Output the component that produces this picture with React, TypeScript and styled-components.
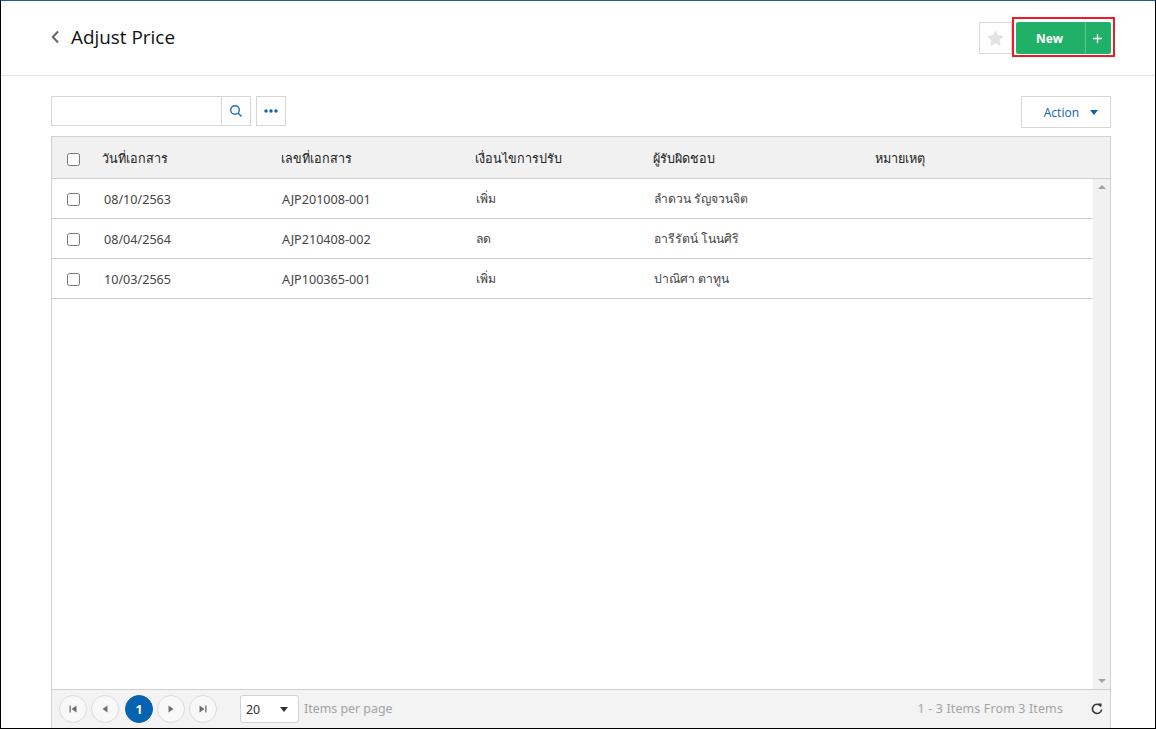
import React from "react";
import styled, { createGlobalStyle } from "styled-components";

const Global = createGlobalStyle`
  html, body { margin: 0; padding: 0; background: #fff; }
  body { font-family: Tahoma, "Noto Sans", "DejaVu Sans", sans-serif; }
  * { box-sizing: border-box; }
`;

const Frame = styled.div`
  width: 1156px;
  height: 729px;
  border-left: 1px solid #000;
  border-right: 1px solid #000;
  border-bottom: 1px solid #000;
  border-top: 1px solid #1c5f96;
  overflow: hidden;
  display: flex;
  flex-direction: column;
`;

const Header = styled.header`
  height: 75px;
  flex: none;
  border-bottom: 1px solid #e3e3e3;
  display: flex;
  align-items: flex-start;
  padding: 16px 40px 0 50px;
`;

const BackTitle = styled.div`
  display: flex;
  align-items: center;
  gap: 12px;
  height: 40px;
  flex: 1;
`;

const Title = styled.h1`
  margin: 0 0 1px;
  font: 400 18.9px "Open Sans", sans-serif;
  color: #111;
`;

const StarButton = styled.button`
  width: 33px;
  height: 32px;
  margin-top: 5px;
  padding: 0;
  background: #fff;
  border: 1px solid #d9d9d9;
  display: flex;
  align-items: center;
  justify-content: center;
`;

const Highlight = styled.div`
  border: 2px solid #ed1c24;
  height: 40px;
  width: 103px;
  padding: 3px 2px 1px;
`;

const NewButton = styled.div`
  height: 32px;
  background: #20b068;
  border-radius: 2px;
  display: flex;
  color: #fff;
`;

const NewLabel = styled.span`
  width: 70px;
  padding-right: 2px;
  border-right: 1px solid #5cc792;
  display: flex;
  align-items: center;
  justify-content: center;
  font: 700 12px "Open Sans", sans-serif;
`;

const NewPlus = styled.span`
  flex: 1;
  padding-right: 2px;
  display: flex;
  align-items: center;
  justify-content: center;
`;

const Content = styled.main`
  flex: 1;
  padding: 20px 44px 0 50px;
  display: flex;
  flex-direction: column;
  min-height: 0;
`;

const Toolbar = styled.div`
  display: flex;
  align-items: flex-start;
  height: 40px;
  flex: none;
`;

const SearchInput = styled.div`
  width: 171px;
  height: 30px;
  border: 1px solid #d6d6d6;
`;

const IconButton = styled.button<{ $gap: number }>`
  width: 30px;
  height: 30px;
  margin-left: ${(p) => p.$gap}px;
  padding: 0;
  background: #fff;
  border: 1px solid #d6d6d6;
  display: flex;
  align-items: center;
  justify-content: center;
`;

const ActionButton = styled.button`
  margin-left: auto;
  width: 90px;
  height: 32px;
  padding: 0 12px 0 0;
  background: #fff;
  border: 1px solid #d6d6d6;
  color: #0b62ae;
  font: 400 12px "Open Sans", sans-serif;
  display: flex;
  align-items: center;
  justify-content: flex-end;
  gap: 11px;
`;

const Grid = styled.section`
  flex: 1;
  min-height: 0;
  border: 1px solid #d2d2d2;
  border-bottom: 0;
  display: flex;
  flex-direction: column;
`;

const COLS = "50px 179px 194px 178px 222px 1fr";

const HeadRow = styled.div`
  height: 42px;
  flex: none;
  padding-top: 4px;
  background: #f1f1f1;
  border-bottom: 1px solid #cfcfcf;
  display: grid;
  grid-template-columns: ${COLS};
  align-items: center;
  font-size: 12.6px;
  color: #222;
`;

const GridBody = styled.div`
  flex: 1;
  min-height: 0;
  display: flex;
`;

const Rows = styled.div`
  flex: 1;
`;

const Row = styled.div`
  height: 40px;
  padding-top: 2px;
  border-bottom: 1px solid #cfcfcf;
  display: grid;
  grid-template-columns: ${COLS};
  align-items: center;
  font-size: 12.6px;
  color: #444;
`;

const CheckCell = styled.div`
  padding-left: 15px;
  display: flex;
`;

const Check = styled.span`
  width: 13px;
  height: 13px;
  border: 1px solid #767676;
  border-radius: 2.5px;
  background: #fff;
`;

const Cell = styled.div<{ $offset?: number; $thai?: boolean }>`
  padding-left: ${(p) => p.$offset ?? 0}px;
  white-space: nowrap;
  ${(p) => (p.$thai ? "font-size: 12.2px; margin-top: -2px;" : "")}
`;

const HeadCell = styled.div`
  white-space: nowrap;
  margin-top: -2px;
`;

const Scrollbar = styled.div`
  width: 17px;
  background: #f1f1f1;
  display: flex;
  flex-direction: column;
  justify-content: space-between;
  align-items: center;
  padding: 6px 0;
`;

const Arrow = styled.span<{ $down?: boolean }>`
  width: 0;
  height: 0;
  border-left: 4px solid transparent;
  border-right: 4px solid transparent;
  ${(p) => (p.$down ? "border-top: 4px solid #a3a3a3;" : "border-bottom: 4px solid #a3a3a3;")}
`;

const Pager = styled.footer`
  height: 39px;
  flex: none;
  background: #f3f3f3;
  border-top: 1px solid #cfcfcf;
  display: flex;
  align-items: center;
  padding: 0 7px;
  font-size: 12.4px;
  color: #a3a3a3;
`;

const PageButton = styled.span<{ $active?: boolean }>`
  width: 28px;
  height: 28px;
  border-radius: 50%;
  margin-right: 4px;
  ${(p) => (p.$active ? "margin-left: 2px;" : "")}
  display: flex;
  align-items: center;
  justify-content: center;
  background: ${(p) => (p.$active ? "#0563b0" : "#f8f8f8")};
  border: 1px solid ${(p) => (p.$active ? "#0563b0" : "#dadada")};
  color: #fff;
  font-weight: 700;
  font-family: "Open Sans", sans-serif;
`;

const SizeSelect = styled.div`
  width: 59px;
  height: 28px;
  margin-left: 19px;
  border: 1px solid #d2d2d2;
  border-radius: 3px;
  background: #fff;
  color: #333;
  display: flex;
  align-items: center;
  justify-content: space-between;
  padding: 0 10px 0 5px;
`;

const PerPage = styled.span`
  margin-left: 5px;
  margin-bottom: 1px;
`;

const Summary = styled.span`
  margin-left: auto;
  margin-right: 28px;
  margin-bottom: 1px;
  letter-spacing: 0.17px;
`;

const DropCaret = styled.span<{ $color: string }>`
  width: 0;
  height: 0;
  border-left: 4px solid transparent;
  border-right: 4px solid transparent;
  border-top: 5px solid ${(p) => p.$color};
`;

const Glyph = ({ d }: { d: string }) => (
  <svg width="10" height="10" viewBox="0 0 10 10" fill="#6e6e6e"><path d={d} /></svg>
);

const rows = [
  ["08/10/2563", "AJP201008-001", "เพิ่ม", "ลำดวน รัญจวนจิต"],
  ["08/04/2564", "AJP210408-002", "ลด", "อารีรัตน์ โนนศิริ"],
  ["10/03/2565", "AJP100365-001", "เพิ่ม", "ปาณิศา ตาทูน"],
];

export default function App() {
  return (
    <Frame>
      <Global />
      <Header>
        <BackTitle>
          <svg width="8" height="14" viewBox="0 0 8 14" fill="none" stroke="#666" strokeWidth="2">
            <path d="M7 1.5 1.8 7 7 12.5" />
          </svg>
          <Title>Adjust Price</Title>
        </BackTitle>
        <StarButton aria-label="favourite">
          <svg width="17" height="16" viewBox="0 0 24 23" fill="#e2e2e2">
            <path d="M12 0l3.7 7.6 8.3 1.2-6 5.9 1.4 8.3L12 19.1 4.6 23 6 14.7 0 8.8l8.3-1.2z" />
          </svg>
        </StarButton>
        <Highlight>
          <NewButton>
            <NewLabel>New</NewLabel>
            <NewPlus>
              <svg width="9" height="9" viewBox="0 0 9 9" stroke="#fff" strokeWidth="1.3">
                <path d="M4.5 0v9M0 4.5h9" />
              </svg>
            </NewPlus>
          </NewButton>
        </Highlight>
      </Header>
      <Content>
        <Toolbar>
          <SearchInput />
          <IconButton $gap={-1} aria-label="search">
            <svg width="14" height="14" viewBox="0 0 14 14" fill="none" stroke="#1c6fb5" strokeWidth="1.4">
              <circle cx="6" cy="6" r="4.3" />
              <path d="M9.2 9.2 12.6 12.6" />
            </svg>
          </IconButton>
          <IconButton $gap={5} aria-label="more">
            <svg width="14" height="4" viewBox="0 0 14 4" fill="#0b62ae">
              <circle cx="2" cy="2" r="1.7" />
              <circle cx="7" cy="2" r="1.7" />
              <circle cx="12" cy="2" r="1.7" />
            </svg>
          </IconButton>
          <ActionButton>
            Action
            <DropCaret $color="#0b62ae" />
          </ActionButton>
        </Toolbar>
        <Grid>
          <HeadRow>
            <CheckCell><Check /></CheckCell>
            <HeadCell>วันที่เอกสาร</HeadCell>
            <HeadCell>เลขที่เอกสาร</HeadCell>
            <HeadCell>เงื่อนไขการปรับ</HeadCell>
            <HeadCell>ผู้รับผิดชอบ</HeadCell>
            <HeadCell>หมายเหตุ</HeadCell>
          </HeadRow>
          <GridBody>
            <Rows>
              {rows.map((r) => (
                <Row key={r[1]}>
                  <CheckCell><Check /></CheckCell>
                  <Cell $offset={2}>{r[0]}</Cell>
                  <Cell $offset={1}>{r[1]}</Cell>
                  <Cell $offset={1} $thai>{r[2]}</Cell>
                  <Cell $offset={1} $thai>{r[3]}</Cell>
                  <Cell />
                </Row>
              ))}
            </Rows>
            <Scrollbar>
              <Arrow />
              <Arrow $down />
            </Scrollbar>
          </GridBody>
          <Pager>
            <PageButton><Glyph d="M1.5 1.5h1.3v7H1.5zM8.5 1.5v7L3.5 5z" /></PageButton>
            <PageButton><Glyph d="M7.5 1.5v7L2.5 5z" /></PageButton>
            <PageButton $active>1</PageButton>
            <PageButton><Glyph d="M2.5 1.5v7L7.5 5z" /></PageButton>
            <PageButton><Glyph d="M1.5 1.5v7L6.5 5zM7.2 1.5h1.3v7H7.2z" /></PageButton>
            <SizeSelect>
              20
              <DropCaret $color="#333" />
            </SizeSelect>
            <PerPage>Items per page</PerPage>
            <Summary>1 - 3 Items From 3 Items</Summary>
            <svg width="12" height="12" viewBox="0 0 12 12" fill="none" stroke="#333" strokeWidth="1.6">
              <path d="M9.8 3.2A4.6 4.6 0 1 0 10.6 6.5" />
              <path d="M7.3 0.6 10.6 0.6 10.2 4.2z" fill="#333" stroke="none" />
            </svg>
          </Pager>
        </Grid>
      </Content>
    </Frame>
  );
}
